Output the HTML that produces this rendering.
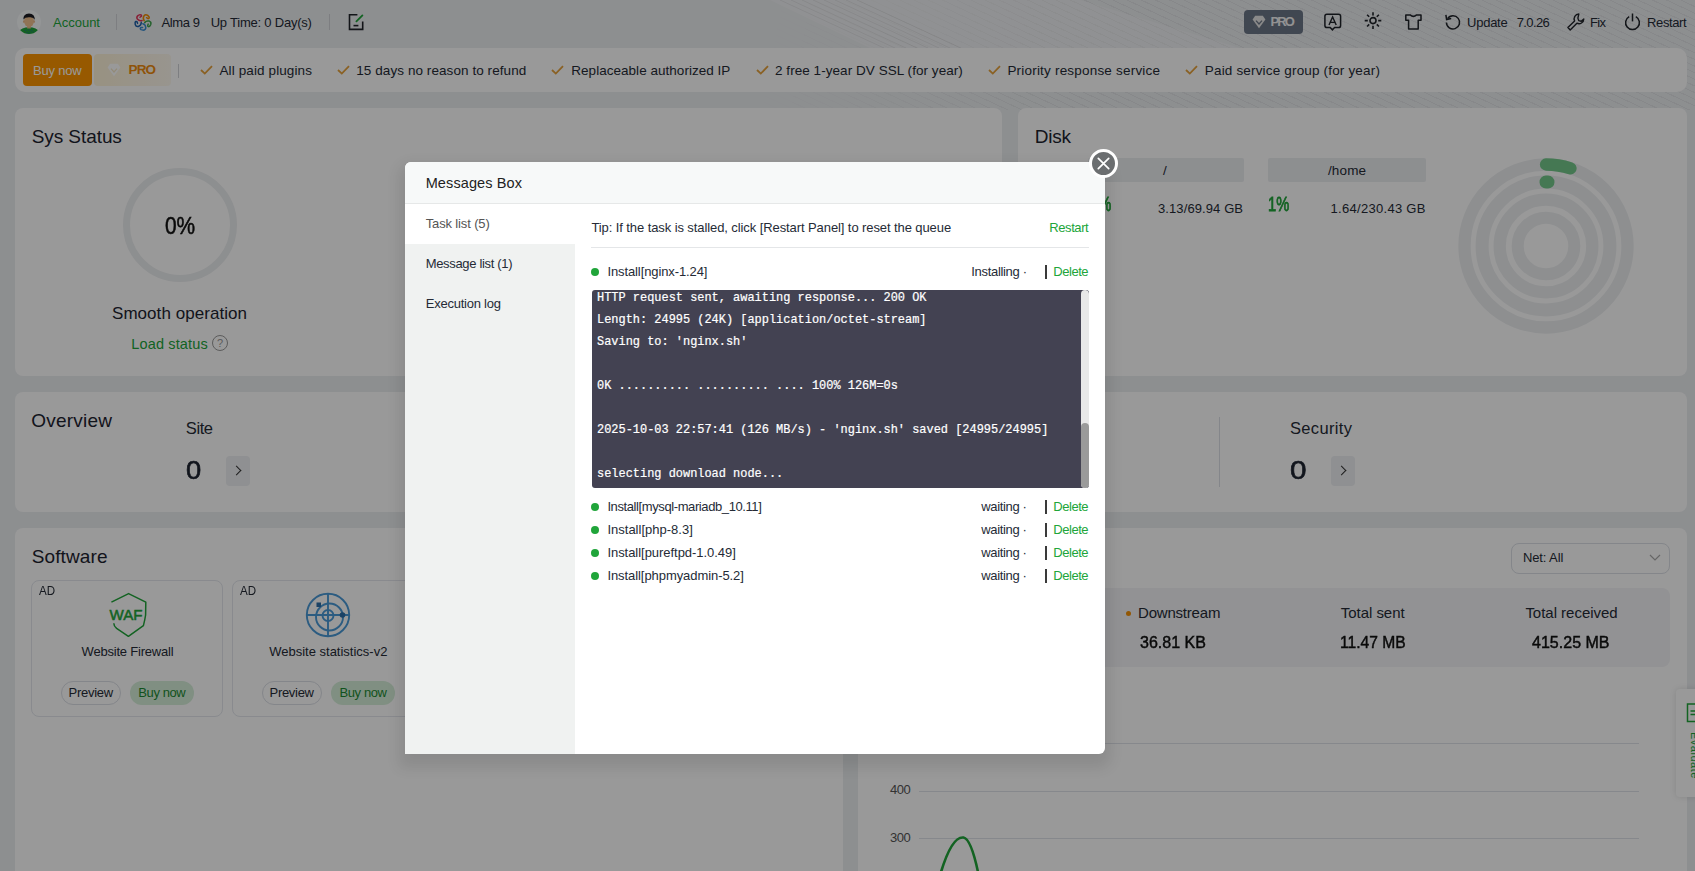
<!DOCTYPE html>
<html><head><meta charset="utf-8"><style>
html,body{margin:0;padding:0;width:1695px;height:871px;overflow:hidden;background:#eceef1;font-family:'Liberation Sans', sans-serif}
.t{position:absolute;white-space:pre;line-height:1}
.card{position:absolute;background:#fff;border-radius:8px}
.vsep{position:absolute;width:1px;background:#d0d3d8}
.ic{position:absolute;overflow:visible}
.arr{position:absolute;width:24px;height:30px;background:#eef0f3;border-radius:4px}
.arr:after{content:"";position:absolute;left:7px;top:11px;width:6px;height:6px;border-right:1.5px solid #333;border-top:1.5px solid #333;transform:rotate(45deg)}
#shade{position:absolute;left:0;top:0;width:1695px;height:871px;background:rgba(0,0,0,.4)}
#modal{position:absolute;left:405px;top:162px;width:700px;height:592px;background:#fff;border-radius:6px 6px 6px 0;box-shadow:0 8px 14px 6px rgba(0,0,0,.09)}
#close{position:absolute;left:1088.5px;top:149px;width:23px;height:23px;border:3px solid #fff;border-radius:50%;background:#6b6e70}
#close svg{position:absolute;left:0;top:0}
</style></head><body>
<div id="page"><div style="position:absolute;left:640px;top:0;width:1055px;height:110px;background:repeating-linear-gradient(25deg,rgba(0,0,0,0) 0 5px,rgba(0,0,0,.045) 5px 6px);-webkit-mask-image:linear-gradient(100deg,transparent 0,transparent 12%,#000 40%,#000 100%)"></div><svg class="ic" style="left:0;top:0" width="1695" height="110" viewBox="0 0 1695 110"><path d="M770 0 L1080 0 L1240 48 L870 48 Z" fill="rgba(255,255,255,.28)"/><path d="M780 0 L884 48" stroke="rgba(0,0,0,.06)" stroke-width="1"/><path d="M791 0 L895 48" stroke="rgba(0,0,0,.06)" stroke-width="1"/><path d="M802 0 L906 48" stroke="rgba(0,0,0,.06)" stroke-width="1"/><path d="M813 0 L917 48" stroke="rgba(0,0,0,.06)" stroke-width="1"/><path d="M824 0 L928 48" stroke="rgba(0,0,0,.06)" stroke-width="1"/><path d="M835 0 L939 48" stroke="rgba(0,0,0,.06)" stroke-width="1"/><path d="M846 0 L950 48" stroke="rgba(0,0,0,.06)" stroke-width="1"/><path d="M857 0 L961 48" stroke="rgba(0,0,0,.06)" stroke-width="1"/></svg><svg class="ic" style="left:17px;top:10px" width="24" height="24" viewBox="0 0 24 24"><defs><clipPath id="avc"><circle cx="12" cy="12" r="12"/></clipPath></defs><circle cx="12" cy="12" r="12" fill="#f7fafb"/><g clip-path="url(#avc)"><ellipse cx="12" cy="21.5" rx="9.2" ry="4.2" fill="#21a33b"/><circle cx="8.5" cy="20.5" r="0.55" fill="#2a5fa0"/><circle cx="11.5" cy="20" r="0.55" fill="#2a5fa0"/><circle cx="14.5" cy="20.2" r="0.55" fill="#2a5fa0"/><circle cx="10" cy="22.5" r="0.55" fill="#2a5fa0"/><circle cx="13" cy="22.4" r="0.55" fill="#2a5fa0"/><circle cx="16" cy="21.8" r="0.55" fill="#2a5fa0"/><circle cx="11" cy="24" r="0.55" fill="#2a5fa0"/><rect x="10.2" y="14.5" width="3.6" height="4" fill="#e9b98a"/><ellipse cx="12" cy="11.3" rx="5" ry="5.6" fill="#f0c290"/><ellipse cx="6.9" cy="11.6" rx="0.9" ry="1.3" fill="#e9b98a"/><ellipse cx="17.1" cy="11.6" rx="0.9" ry="1.3" fill="#e9b98a"/><path d="M6.4 9.5 Q6 3.6 12 3.4 Q18 3.6 17.8 9.8 Q16.5 6.8 12.5 7.2 Q8 7 6.4 9.5Z" fill="#1b1b22"/></g></svg><div class="t" style="left:53.0px;top:16.1px;font-size:13px;color:#20a53a;">Account</div><div class="vsep" style="left:116px;top:14px;height:16px"></div><svg class="ic" style="left:134px;top:13px" width="18" height="18" viewBox="0 0 18 18"><g transform="rotate(-30 9 9)"><path d="M9 7.2 Q6.2 6.8 5.6 3.6 Q5.4 1.2 8.2 0.9 L10.2 1.2 Q11.6 2 10.6 3.2 L8.8 3.4" fill="none" stroke="#e2365b" stroke-width="1.5" stroke-linejoin="round" stroke-linecap="round"/></g><g transform="rotate(42 9 9)"><path d="M9 7.2 Q6.2 6.8 5.6 3.6 Q5.4 1.2 8.2 0.9 L10.2 1.2 Q11.6 2 10.6 3.2 L8.8 3.4" fill="none" stroke="#f08a00" stroke-width="1.5" stroke-linejoin="round" stroke-linecap="round"/></g><g transform="rotate(114 9 9)"><path d="M9 7.2 Q6.2 6.8 5.6 3.6 Q5.4 1.2 8.2 0.9 L10.2 1.2 Q11.6 2 10.6 3.2 L8.8 3.4" fill="none" stroke="#3fa34d" stroke-width="1.5" stroke-linejoin="round" stroke-linecap="round"/></g><g transform="rotate(186 9 9)"><path d="M9 7.2 Q6.2 6.8 5.6 3.6 Q5.4 1.2 8.2 0.9 L10.2 1.2 Q11.6 2 10.6 3.2 L8.8 3.4" fill="none" stroke="#3a8cd0" stroke-width="1.5" stroke-linejoin="round" stroke-linecap="round"/></g><g transform="rotate(258 9 9)"><path d="M9 7.2 Q6.2 6.8 5.6 3.6 Q5.4 1.2 8.2 0.9 L10.2 1.2 Q11.6 2 10.6 3.2 L8.8 3.4" fill="none" stroke="#1e5fa8" stroke-width="1.5" stroke-linejoin="round" stroke-linecap="round"/></g></svg><div class="t" style="left:161.6px;top:16.1px;font-size:13px;color:#252b36;letter-spacing:-0.41px;">Alma 9</div><div class="t" style="left:210.7px;top:16.1px;font-size:13px;color:#252b36;letter-spacing:-0.22px;">Up Time: 0 Day(s)</div><div class="vsep" style="left:329px;top:14px;height:16px"></div><svg class="ic" style="left:348px;top:13px" width="16" height="18" viewBox="0 0 16 18"><path d="M9.4 1.8 H1.5 V16.4 H14.7 V8.6" fill="none" stroke="#1f2329" stroke-width="1.6"/><path d="M8.4 8.4 L14.4 2.4" fill="none" stroke="#20a53a" stroke-width="1.8" stroke-linecap="round"/><path d="M5.5 12.6 H10.4" fill="none" stroke="#1f2329" stroke-width="1.6"/></svg><div style="position:absolute;left:1244px;top:10px;width:59px;height:24px;background:#6c7787;border-radius:4px"></div><svg class="ic" style="left:1252px;top:15px" width="14" height="14" viewBox="0 0 14 14"><path d="M3.2 0.8 H10.8 L13.4 4.6 L7 13.2 L0.6 4.6 Z" fill="#e6e6e6"/><path d="M4 5.6 L7 9 L10 5.6" fill="none" stroke="#6c7787" stroke-width="1.3"/></svg><div class="t" style="left:1270.6px;top:14.9px;font-size:13px;color:#f4f4f4;font-weight:700;letter-spacing:-1.94px;">PRO</div><svg class="ic" style="left:1324px;top:13px" width="18" height="18" viewBox="0 0 18 18"><path d="M3 1.2 H14.5 Q16.6 1.2 16.6 3.3 V12.4 Q16.6 14.5 14.5 14.5 H10.6 L8.4 16.8 L6.2 14.5 H3 Q0.9 14.5 0.9 12.4 V3.3 Q0.9 1.2 3 1.2Z" fill="none" stroke="#1f2329" stroke-width="1.5"/><path d="M5 12 L8.6 4 L12.2 12 M6.3 9.4 H10.9" fill="none" stroke="#1f2329" stroke-width="1.4"/></svg><svg class="ic" style="left:1364px;top:12px" width="18" height="18" viewBox="0 0 18 18"><g stroke="#1f2329" stroke-width="1.6" fill="none"><circle cx="9" cy="8.6" r="3"/><path d="M9 0.3 V3.4 M9 13.8 V16.9 M0.7 8.6 H3.8 M14.2 8.6 H17.3 M3.1 2.7 L5.2 4.8 M12.8 12.4 L14.9 14.5 M3.1 14.5 L5.2 12.4 M12.8 4.8 L14.9 2.7"/></g></svg><svg class="ic" style="left:1405px;top:14px" width="17" height="16" viewBox="0 0 17 16"><path d="M5.2 0.9 Q8.3 3.8 11.6 0.9 L16 0.9 V6.2 H13.2 V15 H3.6 V6.2 H0.8 V0.9 Z" fill="none" stroke="#1f2329" stroke-width="1.5" stroke-linejoin="round"/></svg><svg class="ic" style="left:1445px;top:13px" width="16" height="17" viewBox="0 0 16 17"><path d="M2.6 5.6 A6.6 6.6 0 1 1 1.4 9.6" fill="none" stroke="#1f2329" stroke-width="1.5"/><path d="M0.9 1.8 L1.6 6.5 L6.2 5.6" fill="none" stroke="#1f2329" stroke-width="1.5"/></svg><div class="t" style="left:1467.0px;top:15.7px;font-size:13px;color:#252b36;letter-spacing:-0.24px;">Update</div><div class="t" style="left:1516.7px;top:15.7px;font-size:13px;color:#252b36;letter-spacing:-0.61px;">7.0.26</div><svg class="ic" style="left:1567px;top:13px" width="18" height="18" viewBox="0 0 18 18"><path d="M11.8 1 A4.8 4.8 0 0 0 7.6 7.9 L0.9 14.6 L3.2 16.9 L9.9 10.2 A4.8 4.8 0 0 0 16.8 6 L14.2 8.2 L11.7 7.6 L10.9 5.1 Z" fill="none" stroke="#1f2329" stroke-width="1.4" stroke-linejoin="round"/></svg><div class="t" style="left:1590.0px;top:15.7px;font-size:13px;color:#252b36;letter-spacing:-0.67px;">Fix</div><svg class="ic" style="left:1624px;top:13px" width="17" height="18" viewBox="0 0 17 18"><path d="M5.2 3.6 A6.9 6.9 0 1 0 11.8 3.6" fill="none" stroke="#1f2329" stroke-width="1.5"/><path d="M8.5 0.5 V8.4" fill="none" stroke="#1f2329" stroke-width="1.5"/></svg><div class="t" style="left:1647.0px;top:15.7px;font-size:13px;color:#252b36;letter-spacing:-0.37px;">Restart</div><div class="card" style="left:15px;top:48px;width:1672px;height:44px;border-radius:10px"></div><div style="position:absolute;left:23px;top:54px;width:69px;height:32px;background:#fc9500;border-radius:4px"></div><div class="t" style="left:33.0px;top:63.9px;font-size:13px;color:#fff;letter-spacing:-0.20px;">Buy now</div><div style="position:absolute;left:94px;top:54px;width:77px;height:32px;background:linear-gradient(90deg,#fdf3d8,#fdf6e6 60%,#fdf8ee);border-radius:4px"></div><svg class="ic" style="left:107px;top:63px" width="14" height="14" viewBox="0 0 14 14"><path d="M3.2 0.8 H10.8 L13.4 4.6 L7 13.2 L0.6 4.6 Z" fill="#ffffff"/><path d="M4 5.6 L7 9 L10 5.6" fill="none" stroke="#f3e6c6" stroke-width="1.2"/></svg><div class="t" style="left:128.6px;top:63.3px;font-size:13.5px;color:#ee8b10;font-weight:700;letter-spacing:-0.93px;">PRO</div><div class="vsep" style="left:178px;top:64px;height:14px"></div><svg class="ic" style="left:199.5px;top:65px" width="13" height="10" viewBox="0 0 13 10"><path d="M1 5 L4.8 8.6 L12 1.2" fill="none" stroke="#e6a23c" stroke-width="1.8"/></svg><div class="t" style="left:219.5px;top:63.8px;font-size:13.5px;color:#252b36;letter-spacing:0.11px;">All paid plugins</div><svg class="ic" style="left:337px;top:65px" width="13" height="10" viewBox="0 0 13 10"><path d="M1 5 L4.8 8.6 L12 1.2" fill="none" stroke="#e6a23c" stroke-width="1.8"/></svg><div class="t" style="left:356.3px;top:63.8px;font-size:13.5px;color:#252b36;letter-spacing:0.07px;">15 days no reason to refund</div><svg class="ic" style="left:551px;top:65px" width="13" height="10" viewBox="0 0 13 10"><path d="M1 5 L4.8 8.6 L12 1.2" fill="none" stroke="#e6a23c" stroke-width="1.8"/></svg><div class="t" style="left:571.3px;top:63.8px;font-size:13.5px;color:#252b36;letter-spacing:0.03px;">Replaceable authorized IP</div><svg class="ic" style="left:755.6px;top:65px" width="13" height="10" viewBox="0 0 13 10"><path d="M1 5 L4.8 8.6 L12 1.2" fill="none" stroke="#e6a23c" stroke-width="1.8"/></svg><div class="t" style="left:775.0px;top:63.8px;font-size:13.5px;color:#252b36;letter-spacing:0.05px;">2 free 1-year DV SSL (for year)</div><svg class="ic" style="left:988px;top:65px" width="13" height="10" viewBox="0 0 13 10"><path d="M1 5 L4.8 8.6 L12 1.2" fill="none" stroke="#e6a23c" stroke-width="1.8"/></svg><div class="t" style="left:1007.4px;top:63.8px;font-size:13.5px;color:#252b36;letter-spacing:0.20px;">Priority response service</div><svg class="ic" style="left:1184.6px;top:65px" width="13" height="10" viewBox="0 0 13 10"><path d="M1 5 L4.8 8.6 L12 1.2" fill="none" stroke="#e6a23c" stroke-width="1.8"/></svg><div class="t" style="left:1204.8px;top:63.8px;font-size:13.5px;color:#252b36;letter-spacing:0.17px;">Paid service group (for year)</div><div class="card" style="left:15px;top:108px;width:987px;height:268px"></div><div class="t" style="left:31.7px;top:126.7px;font-size:19px;color:#1d2330;letter-spacing:-0.07px;">Sys Status</div><div style="position:absolute;left:123px;top:168px;width:100px;height:100px;border:7px solid #eceef0;border-radius:50%"></div><div class="t" style="left:164.6px;top:214.7px;font-size:23.5px;color:#111;transform:scaleX(0.889);transform-origin:0 0;-webkit-text-stroke:0.5px currentColor;">0%</div><div class="t" style="left:112.0px;top:304.5px;font-size:17px;color:#1d2330;letter-spacing:0.05px;">Smooth operation</div><div class="t" style="left:131.3px;top:336.7px;font-size:14.5px;color:#20a53a;letter-spacing:0.14px;">Load status</div><div style="position:absolute;left:212px;top:335px;width:14px;height:14px;border:1px solid #999;border-radius:50%;font:11px/14px 'Liberation Sans', sans-serif;color:#999;text-align:center">?</div><div class="card" style="left:1018px;top:108px;width:669px;height:268px"></div><div class="t" style="left:1034.7px;top:126.9px;font-size:19px;color:#1d2330;letter-spacing:-0.22px;">Disk</div><div style="position:absolute;left:1088px;top:158px;width:156px;height:24px;background:#eceef1;border-radius:2px"></div><div style="position:absolute;left:1268px;top:158px;width:158px;height:24px;background:#eceef1;border-radius:2px"></div><div class="t" style="left:1163.0px;top:163.8px;font-size:13.5px;color:#252b36;">/</div><div class="t" style="left:1328.0px;top:163.8px;font-size:13.5px;color:#252b36;letter-spacing:0.12px;">/home</div><div class="t" style="left:1090.0px;top:193.5px;font-size:20.5px;color:#20a53a;transform:scaleX(0.715);transform-origin:0 0;-webkit-text-stroke:0.8px currentColor;">1%</div><div class="t" style="left:1267.8px;top:193.5px;font-size:20.5px;color:#20a53a;transform:scaleX(0.715);transform-origin:0 0;-webkit-text-stroke:0.8px currentColor;">1%</div><div class="t" style="left:1158.0px;top:201.9px;font-size:13px;color:#252b36;letter-spacing:0.10px;">3.13/69.94 GB</div><div class="t" style="left:1330.6px;top:201.9px;font-size:13px;color:#252b36;letter-spacing:0.29px;">1.64/230.43 GB</div><svg class="ic" style="left:1455.5px;top:155.5px" width="180" height="180" viewBox="0 0 180 180"><circle cx="90" cy="90" r="81.5" fill="none" stroke="#edeff1" stroke-width="12.3"/><circle cx="90" cy="90" r="63.9" fill="none" stroke="#edeff1" stroke-width="13"/><circle cx="90" cy="90" r="46.3" fill="none" stroke="#edeff1" stroke-width="12.3"/><circle cx="90" cy="90" r="28.3" fill="none" stroke="#edeff1" stroke-width="12"/><path d="M90 8.5 A81.5 81.5 0 0 1 114.5 12.3" fill="none" stroke="#74c98b" stroke-width="12.3" stroke-linecap="round"/><path d="M90 26.1 A63.9 63.9 0 0 1 92 26.1" fill="none" stroke="#74c98b" stroke-width="13" stroke-linecap="round"/></svg><div class="card" style="left:15px;top:392px;width:1672px;height:120px"></div><div class="t" style="left:31.2px;top:410.8px;font-size:19px;color:#1d2330;letter-spacing:0.23px;">Overview</div><div class="t" style="left:185.8px;top:419.7px;font-size:16.5px;color:#252b36;letter-spacing:-0.41px;">Site</div><div class="t" style="left:185.8px;top:458.0px;font-size:25px;color:#1d2330;transform:scaleX(1.093);transform-origin:0 0;-webkit-text-stroke:0.6px currentColor;">0</div><div class="arr" style="left:226px;top:456px"></div><div class="vsep" style="left:1219px;top:417px;height:70px;background:#dcdfe6"></div><div class="t" style="left:1290.0px;top:419.7px;font-size:16.5px;color:#252b36;letter-spacing:0.34px;">Security</div><div class="t" style="left:1290.0px;top:458.0px;font-size:25px;color:#1d2330;transform:scaleX(1.187);transform-origin:0 0;-webkit-text-stroke:0.6px currentColor;">0</div><div class="arr" style="left:1331px;top:456px"></div><div class="card" style="left:15px;top:528px;width:828px;height:360px"></div><div class="t" style="left:31.7px;top:547.0px;font-size:19px;color:#1d2330;letter-spacing:0.13px;">Software</div><div style="position:absolute;left:31.2px;top:580px;width:190px;height:135px;border:1px solid #e4e7ed;border-radius:8px"></div><div class="t" style="left:38.5px;top:584.5px;font-size:12.5px;color:#252b36;transform:scaleX(0.927);transform-origin:0 0;">AD</div><div style="position:absolute;left:232.3px;top:580px;width:190px;height:135px;border:1px solid #e4e7ed;border-radius:8px"></div><div class="t" style="left:239.6px;top:584.5px;font-size:12.5px;color:#252b36;transform:scaleX(0.927);transform-origin:0 0;">AD</div><svg class="ic" style="left:108px;top:592px" width="40" height="46" viewBox="0 0 40 46"><path d="M3.4 10.2 L20.6 1.6 L37.8 10.2 L37.6 23 Q36.8 28.5 35.4 33.6 L20.4 44.3 L8.6 36.4 Q5.8 34 5.8 31.2" fill="none" stroke="#20a53a" stroke-width="1.5" stroke-linejoin="round"/><text x="18" y="28.2" text-anchor="middle" font-family="Liberation Sans" font-weight="400" font-size="15" fill="#20a53a" stroke="#20a53a" stroke-width="0.5" textLength="33" lengthAdjust="spacingAndGlyphs">WAF</text></svg><div class="t" style="left:81.6px;top:644.9px;font-size:13px;color:#252b36;letter-spacing:-0.21px;">Website Firewall</div><svg class="ic" style="left:305px;top:592px" width="46" height="46" viewBox="0 0 46 46"><g fill="none" stroke="#4a9ad8" stroke-width="1.9"><circle cx="23" cy="23" r="21.2"/><circle cx="24.5" cy="25" r="13.5"/><circle cx="23" cy="23.5" r="5.5"/><path d="M23 1.5 V45 M1.5 23 H45"/></g><rect x="11.5" y="10.5" width="4.5" height="4.5" fill="#2d6fa8"/><circle cx="37.5" cy="23" r="2.8" fill="#2d6fa8"/></svg><div class="t" style="left:269.2px;top:644.9px;font-size:13px;color:#252b36;">Website statistics-v2</div><div style="position:absolute;left:61.1px;top:681px;width:58px;height:22px;border:1px solid #dcdfe6;border-radius:12px"></div><div class="t" style="left:68.6px;top:686.4px;font-size:13px;color:#252b36;letter-spacing:-0.29px;">Preview</div><div style="position:absolute;left:130px;top:681px;width:64px;height:24px;background:#d5efd9;border-radius:12px"></div><div class="t" style="left:138.3px;top:686.4px;font-size:13px;color:#1d8a33;letter-spacing:-0.40px;">Buy now</div><div style="position:absolute;left:262px;top:681px;width:58px;height:22px;border:1px solid #dcdfe6;border-radius:12px"></div><div class="t" style="left:269.5px;top:686.4px;font-size:13px;color:#252b36;letter-spacing:-0.29px;">Preview</div><div style="position:absolute;left:331.2px;top:681px;width:64px;height:24px;background:#d5efd9;border-radius:12px"></div><div class="t" style="left:339.5px;top:686.4px;font-size:13px;color:#1d8a33;letter-spacing:-0.40px;">Buy now</div><div class="card" style="left:858px;top:528px;width:829px;height:360px"></div><div style="position:absolute;left:1511px;top:543px;width:157px;height:29px;border:1px solid #dcdfe6;border-radius:8px"></div><div class="t" style="left:1523.0px;top:551.2px;font-size:13px;color:#252b36;letter-spacing:-0.13px;">Net: All</div><svg class="ic" style="left:1649px;top:554px" width="12" height="7" viewBox="0 0 12 7"><path d="M1 1 L6 6 L11 1" fill="none" stroke="#aaa" stroke-width="1.2"/></svg><div style="position:absolute;left:875px;top:588px;width:795px;height:79px;background:#f3f4f7;border-radius:8px"></div><div style="position:absolute;left:1126px;top:610.5px;width:5px;height:5px;background:#f39108;border-radius:50%"></div><div class="t" style="left:1138.0px;top:605.3px;font-size:15px;color:#252b36;letter-spacing:-0.20px;">Downstream</div><div class="t" style="left:1140.4px;top:633.9px;font-size:16.5px;color:#111;transform:scaleX(0.972);transform-origin:0 0;-webkit-text-stroke:0.45px currentColor;">36.81 KB</div><div class="t" style="left:1340.8px;top:605.3px;font-size:15px;color:#252b36;letter-spacing:-0.04px;">Total sent</div><div class="t" style="left:1339.7px;top:633.9px;font-size:16.5px;color:#111;transform:scaleX(0.947);transform-origin:0 0;-webkit-text-stroke:0.45px currentColor;">11.47 MB</div><div class="t" style="left:1525.4px;top:605.3px;font-size:15px;color:#252b36;letter-spacing:-0.02px;">Total received</div><div class="t" style="left:1532.4px;top:633.9px;font-size:16.5px;color:#111;transform:scaleX(0.972);transform-origin:0 0;-webkit-text-stroke:0.45px currentColor;">415.25 MB</div><div style="position:absolute;left:919px;top:743px;width:720px;height:1px;background:#e0e3ea"></div><div style="position:absolute;left:919px;top:791px;width:720px;height:1px;background:#e0e3ea"></div><div style="position:absolute;left:919px;top:838px;width:720px;height:1px;background:#e0e3ea"></div><div class="t" style="left:889.9px;top:783.4px;font-size:13px;color:#555;letter-spacing:-0.45px;">400</div><div class="t" style="left:889.9px;top:831.4px;font-size:13px;color:#555;letter-spacing:-0.45px;">300</div><svg class="ic" style="left:930px;top:830px" width="60" height="45" viewBox="0 0 60 45"><path d="M11 42 Q22 6 33.5 7.5 Q41 9 48 42" fill="none" stroke="#20a53a" stroke-width="2.6"/></svg><div style="position:absolute;left:1676px;top:689px;width:25px;height:108px;background:#fff;border-radius:4px 0 0 4px;box-shadow:0 0 6px rgba(0,0,0,.12)"></div><svg class="ic" style="left:1686px;top:703px" width="12" height="20" viewBox="0 0 12 20"><path d="M12 1 H1.5 V18.5 H12" fill="none" stroke="#20a53a" stroke-width="1.5"/><path d="M4.5 8 H12 M4.5 11.5 H12" stroke="#20a53a" stroke-width="1.3"/></svg><div class="t" style="left:1700px;top:732px;font-size:11px;color:#20a53a;transform:rotate(90deg);transform-origin:0 0;letter-spacing:0.5px">Evaluate</div></div>
<div id="shade"></div>
<div id="modal"><div style="position:absolute;left:0;top:0;width:700px;height:41px;background:#f7f9f9;border-bottom:1px solid #e6e8e8;border-radius:6px 6px 0 0"></div><div style="position:absolute;left:0;top:42px;width:170px;height:550px;background:#f0f2f1"></div><div style="position:absolute;left:0;top:42px;width:170px;height:40px;background:#fff"></div></div>
<div class="t" style="left:425.7px;top:175.6px;font-size:14.5px;color:#222;letter-spacing:0.10px;">Messages Box</div><div class="t" style="left:425.7px;top:216.6px;font-size:13px;color:#555;letter-spacing:-0.14px;">Task list (5)</div><div class="t" style="left:425.7px;top:256.9px;font-size:13px;color:#252b36;letter-spacing:-0.33px;">Message list (1)</div><div class="t" style="left:425.7px;top:297.3px;font-size:13px;color:#252b36;letter-spacing:-0.23px;">Execution log</div><div class="t" style="left:591.4px;top:221.1px;font-size:13px;color:#252b36;letter-spacing:-0.09px;">Tip: If the task is stalled, click [Restart Panel] to reset the queue</div><div class="t" style="left:1049.3px;top:221.1px;font-size:13px;color:#20a53a;letter-spacing:-0.42px;">Restart</div><div style="position:absolute;left:591px;top:247px;width:498px;height:1px;background:#e4e6e8"></div><div style="position:absolute;left:591px;top:267.8px;width:8px;height:8px;background:#20a53a;border-radius:50%"></div><div class="t" style="left:607.4px;top:264.9px;font-size:13px;color:#252b36;letter-spacing:-0.10px;">Install[nginx-1.24]</div><div class="t" style="left:971.3px;top:265.1px;font-size:13px;color:#252b36;letter-spacing:-0.32px;">Installing ·</div><div style="position:absolute;left:1045px;top:264.6px;width:1.5px;height:14px;background:#3a3a3a"></div><div class="t" style="left:1053.3px;top:265.1px;font-size:13px;color:#20a53a;letter-spacing:-0.46px;">Delete</div><div style="position:absolute;left:591px;top:503.0px;width:8px;height:8px;background:#20a53a;border-radius:50%"></div><div class="t" style="left:607.4px;top:500.1px;font-size:13px;color:#252b36;letter-spacing:-0.40px;">Install[mysql-mariadb_10.11]</div><div class="t" style="left:981.2px;top:500.3px;font-size:13px;color:#252b36;letter-spacing:-0.34px;">waiting ·</div><div style="position:absolute;left:1045px;top:499.8px;width:1.5px;height:14px;background:#3a3a3a"></div><div class="t" style="left:1053.3px;top:500.3px;font-size:13px;color:#20a53a;letter-spacing:-0.46px;">Delete</div><div style="position:absolute;left:591px;top:526.0px;width:8px;height:8px;background:#20a53a;border-radius:50%"></div><div class="t" style="left:607.4px;top:523.1px;font-size:13px;color:#252b36;letter-spacing:0.01px;">Install[php-8.3]</div><div class="t" style="left:981.2px;top:523.3px;font-size:13px;color:#252b36;letter-spacing:-0.34px;">waiting ·</div><div style="position:absolute;left:1045px;top:522.8px;width:1.5px;height:14px;background:#3a3a3a"></div><div class="t" style="left:1053.3px;top:523.3px;font-size:13px;color:#20a53a;letter-spacing:-0.46px;">Delete</div><div style="position:absolute;left:591px;top:548.9px;width:8px;height:8px;background:#20a53a;border-radius:50%"></div><div class="t" style="left:607.4px;top:546.0px;font-size:13px;color:#252b36;letter-spacing:-0.04px;">Install[pureftpd-1.0.49]</div><div class="t" style="left:981.2px;top:546.2px;font-size:13px;color:#252b36;letter-spacing:-0.34px;">waiting ·</div><div style="position:absolute;left:1045px;top:545.7px;width:1.5px;height:14px;background:#3a3a3a"></div><div class="t" style="left:1053.3px;top:546.2px;font-size:13px;color:#20a53a;letter-spacing:-0.46px;">Delete</div><div style="position:absolute;left:591px;top:571.9px;width:8px;height:8px;background:#20a53a;border-radius:50%"></div><div class="t" style="left:607.4px;top:569.0px;font-size:13px;color:#252b36;letter-spacing:-0.07px;">Install[phpmyadmin-5.2]</div><div class="t" style="left:981.2px;top:569.2px;font-size:13px;color:#252b36;letter-spacing:-0.34px;">waiting ·</div><div style="position:absolute;left:1045px;top:568.7px;width:1.5px;height:14px;background:#3a3a3a"></div><div class="t" style="left:1053.3px;top:569.2px;font-size:13px;color:#20a53a;letter-spacing:-0.46px;">Delete</div><div style="position:absolute;left:592px;top:290px;width:497px;height:198px;background:#434252;border-radius:3px;overflow:hidden"><div style="position:absolute;right:0;top:0;width:8px;height:198px;background:#e8e8e8;border-radius:4px"></div><div style="position:absolute;right:0;top:133px;width:8px;height:65px;background:#9a9a9a;border-radius:4px"></div></div><div class="t" style="left:597.0px;top:293.3px;font-size:11.95px;color:#fff;font-family:'Liberation Mono', monospace;-webkit-text-stroke:0.2px #fff;">HTTP request sent, awaiting response... 200 OK</div><div class="t" style="left:597.0px;top:315.3px;font-size:11.95px;color:#fff;font-family:'Liberation Mono', monospace;-webkit-text-stroke:0.2px #fff;">Length: 24995 (24K) [application/octet-stream]</div><div class="t" style="left:597.0px;top:337.3px;font-size:11.95px;color:#fff;font-family:'Liberation Mono', monospace;-webkit-text-stroke:0.2px #fff;">Saving to: 'nginx.sh'</div><div class="t" style="left:597.0px;top:381.3px;font-size:11.95px;color:#fff;font-family:'Liberation Mono', monospace;-webkit-text-stroke:0.2px #fff;">0K .......... .......... .... 100% 126M=0s</div><div class="t" style="left:597.0px;top:425.3px;font-size:11.95px;color:#fff;font-family:'Liberation Mono', monospace;-webkit-text-stroke:0.2px #fff;">2025-10-03 22:57:41 (126 MB/s) - 'nginx.sh' saved [24995/24995]</div><div class="t" style="left:597.0px;top:469.3px;font-size:11.95px;color:#fff;font-family:'Liberation Mono', monospace;-webkit-text-stroke:0.2px #fff;">selecting download node...</div><div id="close"><svg width="23" height="23" viewBox="0 0 23 23"><path d="M6.3 6.3 L16.7 16.7 M16.7 6.3 L6.3 16.7" stroke="#fff" stroke-width="1.7" stroke-linecap="round"/></svg></div>
</body></html>
